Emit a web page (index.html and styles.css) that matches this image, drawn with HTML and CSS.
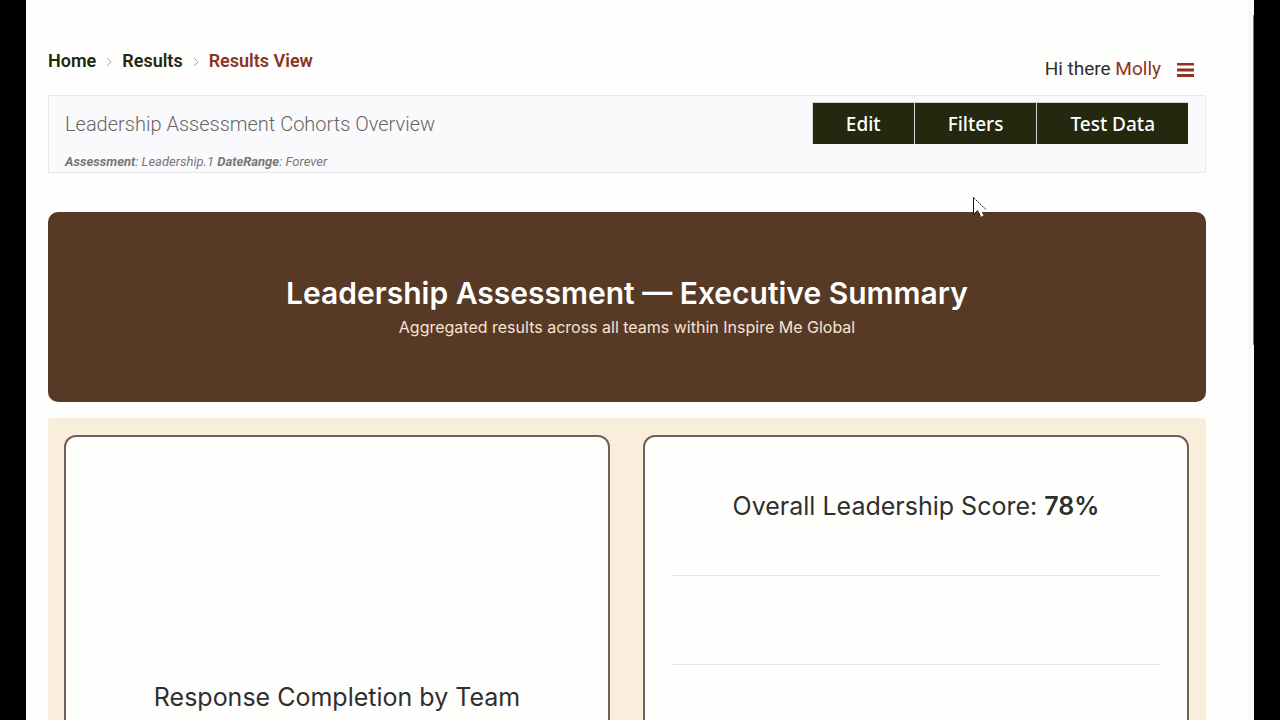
FILE: index.html
```
<!DOCTYPE html>
<html lang="en">
<head>
    <meta charset="UTF-8">
    <meta name="viewport" content="width=device-width, initial-scale=1.0">
    <title>Results View</title>
    <link rel="stylesheet" href="styles.css">
</head>
<body>

<div class="page">
    <div class="content">
        <!-- Breadcrumbs and user menu -->
        <header class="top-bar">
            <nav class="breadcrumbs" aria-label="Breadcrumb">
                <a href="#">Home</a>
                <svg class="chevron" viewBox="0 0 6 10"><path d="M1 2l4 4-4 4"/></svg>
                <a href="#">Results</a>
                <svg class="chevron" viewBox="0 0 6 10"><path d="M1 2l4 4-4 4"/></svg>
                <a href="#" class="current">Results View</a>
            </nav>
            <div class="user">
                <span>Hi there <a href="#">Molly</a></span>
                <button class="menu-button" aria-label="Menu">
                    <svg viewBox="0 0 17 16"><path d="M0 2h17v2.500H0zM0 7.500h17v3H0zM0 13h17v3H0z"/></svg>
                </button>
            </div>
        </header>

        <!-- Report title and actions -->
        <section class="report-bar">
            <div class="report-info">
                <h1>Leadership Assessment Cohorts Overview</h1>
                <p><b>Assessment</b>: Leadership.1 <b>DateRange</b>: Forever</p>
            </div>
            <div class="actions">
                <button>Edit</button>
                <button>Filters</button>
                <button>Test Data</button>
            </div>
        </section>

        <section class="banner">
            <h2>Leadership Assessment — Executive Summary</h2>
            <p>Aggregated results across all teams within Inspire Me Global</p>
        </section>

        <!-- Result cards -->
        <section class="cards">
            <div class="card chart-card">
                <h3>Response Completion by Team</h3>
            </div>
            <div class="card">
                <h3 class="score">Overall Leadership Score: <b>78%</b></h3>
                <div class="score-row"></div>
                <div class="score-row"></div>
            </div>
        </section>
    </div>
    <div class="scroll-track"><div class="scroll-thumb"></div></div>
</div>

<svg class="cursor" viewBox="0 0 14 21"><path class="cursor-fill" d="M.5.5v17l4-4 3 6.500 3-1.500-3-5.500h5.500z"/><path class="cursor-edge" d="M.5.5v17l4-4 3 6"/><path class="cursor-edge dotted" d="M.5.500l12.500 12"/></svg>

</body>
</html>
```
FILE: styles.css
```
* {
    box-sizing: border-box;
}

body {
    margin: 0;
    padding: 0 26px;
    background: #000;
    color: #2f2f2f;
    font-family: Roboto, sans-serif;
}

h1, h2, h3, p {
    margin: 0;
    font-weight: 400;
}

a {
    color: inherit;
    text-decoration: none;
}

button {
    border: none;
    cursor: pointer;
}

.page {
    display: flex;
    height: 100vh;
    overflow: hidden;
    background: #fefefd;
}

.content {
    flex: 1;
    padding: 48px 42px 0 22px;
}

/* Top bar */
.top-bar {
    display: flex;
    justify-content: space-between;
    align-items: flex-start;
    height: 47px;
}

.breadcrumbs {
    display: flex;
    align-items: center;
    gap: 10px;
    font-size: 18px;
    line-height: 26px;
    font-weight: 600;
    color: #23280e;
}

.breadcrumbs .current {
    color: #8b3325;
}

.chevron {
    width: 6px;
    height: 10px;
    fill: none;
    stroke: #aaa;
}

.user {
    display: flex;
    align-items: center;
    gap: 16px;
    padding: 8px 12px 0 0;
    font-size: 19px;
    line-height: 26px;
}

.user a {
    color: #8b3325;
}

.menu-button {
    padding: 0;
    background: none;
}

.menu-button svg {
    display: block;
    width: 17px;
    height: 16px;
    fill: #8b3325;
}

/* Report bar */
.report-bar {
    display: flex;
    justify-content: space-between;
    align-items: flex-start;
    height: 78px;
    padding: 6px 17px 0 16px;
    background: #fafafd;
    border: 1px solid #e9e9ec;
}

.report-info {
    color: #777;
}

.report-info h1 {
    padding-top: 8px;
    font-size: 20px;
    line-height: 28px;
    font-weight: 350;
    color: #666;
}

.report-info p {
    padding-top: 14px;
    font-size: 13px;
    line-height: 20px;
    font-style: italic;
}

.actions {
    display: flex;
    gap: 1px;
    padding: 1px 0 0 1px;
    background: #d5d5d2;
}

.actions button {
    height: 41px;
    padding: 0 33px;
    background: #23280e;
    color: #fff;
    font-family: "Noto Sans", sans-serif;
    font-size: 19px;
    font-weight: 500;
}

/* Banner */
.banner {
    display: flex;
    flex-direction: column;
    align-items: center;
    justify-content: center;
    height: 190px;
    margin-top: 39px;
    background: #573a25;
    border-radius: 10px;
    color: #fff;
    font-family: Inter, sans-serif;
}

.banner h2 {
    font-size: 30px;
    line-height: 40px;
    font-weight: 600;
}

.banner p {
    font-size: 16px;
    line-height: 28px;
    color: #f8e3d2;
}

/* Cards */
.cards {
    display: grid;
    grid-template-columns: 1fr 1fr;
    gap: 33px;
    margin-top: 16px;
    padding: 17px 17px 17px 16px;
    background: #f9eedc;
    border-radius: 2px;
}

.card {
    min-height: 524px;
    padding: 0 28px;
    background: #fefefd;
    border: 2px solid #70605a;
    border-radius: 12px;
    font-family: Inter, sans-serif;
    text-align: center;
}

.card h3 {
    font-size: 25px;
    line-height: 32px;
}

.chart-card {
    display: flex;
    align-items: center;
    justify-content: center;
}

.score {
    padding: 53px 0;
}

.score b {
    font-weight: 600;
}

.score-row {
    height: 89px;
    border-top: 1px solid #e5e5e5;
}

/* Scrollbar */
.scroll-track {
    display: flex;
    justify-content: flex-end;
    width: 6px;
    padding-top: 15px;
    background: #fafafd;
}

.scroll-thumb {
    width: 1px;
    height: 330px;
    background: #777;
}

.cursor {
    position: absolute;
    left: 973px;
    top: 197px;
    width: 14px;
    height: 21px;
}

.cursor-fill {
    fill: #fff;
}

.cursor-edge {
    fill: none;
    stroke: #111;
}

.dotted {
    stroke-dasharray: 2 1;
}
```
